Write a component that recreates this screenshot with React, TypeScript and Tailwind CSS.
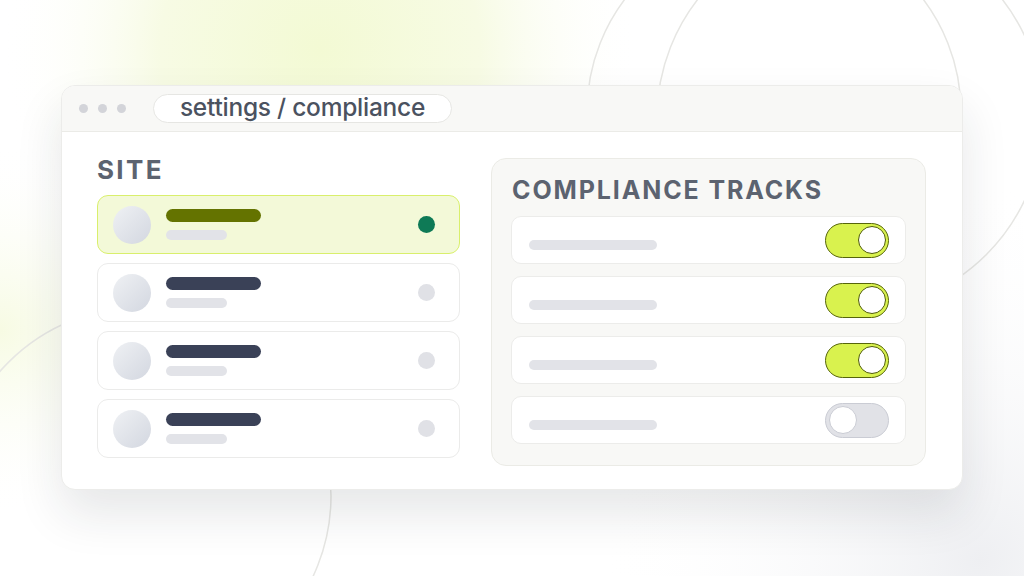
import React from "react";

const font = { fontFamily: "Inter, 'Noto Sans', sans-serif" };

function Background() {
  return (
    <svg className="absolute inset-0" width="1024" height="576" viewBox="0 0 1024 576">
      <defs>
        <radialGradient id="glow" cx="320" cy="50" r="320" gradientUnits="userSpaceOnUse">
          <stop offset="0" stopColor="#f3fad4" />
          <stop offset="0.5" stopColor="#f7fbe4" />
          <stop offset="1" stopColor="#ffffff" stopOpacity="0" />
        </radialGradient>
        <radialGradient id="glow2" cx="0" cy="330" r="190" gradientUnits="userSpaceOnUse">
          <stop offset="0" stopColor="#f7fbe3" />
          <stop offset="1" stopColor="#ffffff" stopOpacity="0" />
        </radialGradient>
        <radialGradient id="gray" cx="980" cy="560" r="380" gradientUnits="userSpaceOnUse">
          <stop offset="0" stopColor="#eeeff2" />
          <stop offset="1" stopColor="#ffffff" stopOpacity="0" />
        </radialGradient>
      </defs>
      <rect width="1024" height="576" fill="#ffffff" />
      <rect width="1024" height="576" fill="url(#glow)" />
      <rect width="1024" height="576" fill="url(#glow2)" />
      <rect width="1024" height="576" fill="url(#gray)" />
      <circle cx="774" cy="112" r="187" fill="none" stroke="#e6e6e3" strokeWidth="1.5" />
      <circle cx="850" cy="118" r="193" fill="none" stroke="#e6e6e3" strokeWidth="1.5" />
      <circle cx="142" cy="496" r="189" fill="none" stroke="#e6e6e3" strokeWidth="1.5" />
    </svg>
  );
}

function SiteCard({ active }: { active?: boolean }) {
  return (
    <div
      className={
        "flex items-center h-[59px] rounded-[11px] border-[1.5px] pl-[15px] pr-[24px] " +
        (active ? "bg-[#f3f9d8] border-[#d9ef6c]" : "bg-white border-[#ebebea]")
      }
    >
      <div className="w-[38px] h-[38px] rounded-full bg-gradient-to-br from-[#eff1f4] to-[#d3d7e0]" />
      <div className="flex flex-col gap-[8px] ml-[15px]">
        <div className={"w-[95px] h-[13px] rounded-full " + (active ? "bg-[#647300]" : "bg-[#3a4157]")} />
        <div className="w-[61px] h-[10px] rounded-full bg-[#e2e3e8]" />
      </div>
      <div className="flex-1" />
      <div className={"w-[17px] h-[17px] rounded-full " + (active ? "bg-[#0e7a56]" : "bg-[#e0e1e6]")} />
    </div>
  );
}

function Toggle({ on }: { on?: boolean }) {
  return (
    <div
      className={
        "flex items-center w-[64px] h-[35px] rounded-full border-[1.5px] px-[2.5px] " +
        (on ? "bg-[#d9f24e] border-[#56650a] justify-end" : "bg-[#e1e2e7] border-[#caccd4] justify-start")
      }
    >
      <div
        className={
          "w-[28px] h-[28px] rounded-full bg-white border-[1.5px] " +
          (on ? "border-[#4f5c04]" : "border-[#caccd4]")
        }
      />
    </div>
  );
}

function TrackRow({ on }: { on?: boolean }) {
  return (
    <div className="flex items-center justify-between h-[48px] rounded-[10px] bg-white border-[1.5px] border-[#ececea] pl-[17px] pr-[16px]">
      <div className="mt-[10px] w-[128px] h-[10px] rounded-full bg-[#e2e3e8]" />
      <Toggle on={on} />
    </div>
  );
}

export default function App() {
  return (
    <div className="relative w-[1024px] h-[576px] overflow-hidden" style={font}>
      <Background />
      <div className="relative pt-[85px] pl-[61px]">
        <div className="w-[902px] h-[405px] rounded-[14px] bg-white border border-[#ececea] shadow-[0_24px_48px_rgba(30,35,50,0.11)] overflow-hidden flex flex-col">
          <div className="h-[46px] shrink-0 bg-[#f8f8f6] border-b-[1.5px] border-[#ebebe7] flex items-center pl-[17px]">
            <div className="flex gap-[10px]">
              <div className="w-[9px] h-[9px] rounded-full bg-[#d3d4d9]" />
              <div className="w-[9px] h-[9px] rounded-full bg-[#d3d4d9]" />
              <div className="w-[9px] h-[9px] rounded-full bg-[#d3d4d9]" />
            </div>
            <div className="ml-[27px] w-[299px] h-[29px] rounded-full bg-white border-[1.5px] border-[#e6e6e3] flex items-center justify-center">
              <span className="text-[24.5px] leading-none font-medium text-[#4b5260] -mt-[2px] tracking-[-0.01em]">
                settings / compliance
              </span>
            </div>
          </div>
          <div className="flex pl-[35px] pr-[36px] gap-[31px]">
            <div className="w-[364px] flex flex-col pt-[25px]">
              <div className="text-[26px] leading-none font-bold tracking-[0.09em] text-[#5c6370]">SITE</div>
              <div className="mt-[12px] flex flex-col gap-[9px]">
                <SiteCard active />
                <SiteCard />
                <SiteCard />
                <SiteCard />
              </div>
            </div>
            <div className="w-[436px] mt-[26px] h-[308px] rounded-[15px] bg-[#f8f8f6] border-[1.5px] border-[#ebebe6] px-[19px] pt-[19px] flex flex-col">
              <div className="pl-[1px] text-[25px] leading-none font-bold tracking-[0.075em] text-[#5c6370]">
                COMPLIANCE TRACKS
              </div>
              <div className="mt-[13px] flex flex-col gap-[12px]">
                <TrackRow on />
                <TrackRow on />
                <TrackRow on />
                <TrackRow />
              </div>
            </div>
          </div>
        </div>
      </div>
    </div>
  );
}
